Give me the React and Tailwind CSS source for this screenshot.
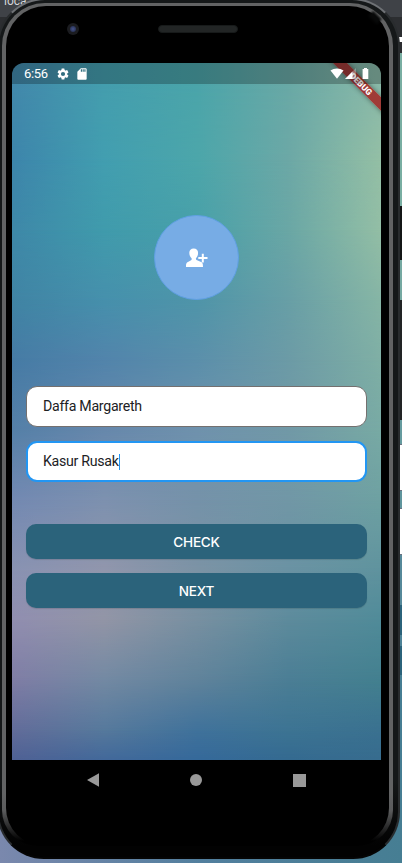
import React from "react";

/* Wallpaper: horizontal colour bands, each one fading in over the band above it. */
function Wallpaper() {
  return (
    <div className="absolute inset-0 bg-[linear-gradient(90deg,#4288ab,#449eae_25%,#4ba5aa_50%,#69a9a6_75%,#8ab9a8)]">
      <div className="absolute inset-0 bg-[linear-gradient(90deg,#3d85ab,#429eb0_25%,#4ca6aa_50%,#6ca8a6_75%,#94bfa5)] [mask-image:linear-gradient(transparent_20px,black_97px)]" />
      <div className="absolute inset-0 bg-[linear-gradient(90deg,#3e88a8,#409bac_25%,#48a0a9_50%,#6aa7a5_75%,#93bea5)] [mask-image:linear-gradient(transparent_97px,black_167px)]" />
      <div className="absolute inset-0 bg-[linear-gradient(90deg,#4084a4,#4690ac_25%,#4f95a9_50%,#689fa6_75%,#86b5a5)] [mask-image:linear-gradient(transparent_167px,black_237px)]" />
      <div className="absolute inset-0 bg-[linear-gradient(90deg,#467ba5,#5284ab_25%,#5b8fab_50%,#6c9ba6_75%,#7fafa5)] [mask-image:linear-gradient(transparent_237px,black_297px)]" />
      <div className="absolute inset-0 bg-[linear-gradient(90deg,#5580a8,#6788ac_25%,#6f92ad_50%,#7199a7_75%,#78aaa4)] [mask-image:linear-gradient(transparent_297px,black_367px)]" />
      <div className="absolute inset-0 bg-[linear-gradient(90deg,#7389b2,#7d91af_25%,#7592a9_50%,#7197a6_75%,#6ea1a2)] [mask-image:linear-gradient(transparent_367px,black_437px)]" />
      <div className="absolute inset-0 bg-[linear-gradient(90deg,#8992b2,#9196ac_25%,#7c93a5_50%,#6a92a3_75%,#5f939e)] [mask-image:linear-gradient(transparent_437px,black_507px)]" />
      <div className="absolute inset-0 bg-[linear-gradient(90deg,#918eb0,#9295a6_25%,#7890a1_50%,#5d8b9c_75%,#508b99)] [mask-image:linear-gradient(transparent_507px,black_557px)]" />
      <div className="absolute inset-0 bg-[linear-gradient(90deg,#7f7da5,#7389a3_25%,#60839b_50%,#4b7e95_75%,#43808f)] [mask-image:linear-gradient(transparent_557px,black_617px)]" />
      <div className="absolute inset-0 bg-[linear-gradient(90deg,#626c9a,#56799c_25%,#40729b_50%,#3d7493_75%,#3a7190)] [mask-image:linear-gradient(transparent_617px,black_667px)]" />
      <div className="absolute inset-0 bg-[linear-gradient(90deg,#4f6194,#42689a_25%,#35699a_50%,#346a90_75%,#376c8e)] [mask-image:linear-gradient(transparent_667px,black_697px)]" />
    </div>
  );
}

function StatusBar() {
  return (
    <div className="relative flex h-[21px] items-center bg-black/25 pl-3 pr-3 text-white">
      <span className="w-[24px] text-[13px] font-normal leading-5 tracking-[-0.3px]">6:56</span>
      <svg className="ml-[8px] size-[14px]" viewBox="0 0 24 24" fill="currentColor">
        <path d="M19.14 12.94c.04-.3.06-.61.06-.94s-.02-.64-.07-.94l2.03-1.58a.49.49 0 0 0 .12-.61l-1.92-3.32a.49.49 0 0 0-.59-.22l-2.39.96a7 7 0 0 0-1.62-.94l-.36-2.54a.48.48 0 0 0-.48-.41h-3.84a.47.47 0 0 0-.47.41l-.36 2.54c-.59.24-1.13.57-1.62.94l-2.39-.96a.48.48 0 0 0-.59.22L2.74 8.87a.47.47 0 0 0 .12.61l2.03 1.58a7.2 7.2 0 0 0 0 1.88l-2.03 1.58a.49.49 0 0 0-.12.61l1.92 3.32c.12.22.37.29.59.22l2.39-.96c.5.38 1.03.7 1.62.94l.36 2.54c.05.24.24.41.48.41h3.84c.24 0 .44-.17.47-.41l.36-2.54a7 7 0 0 0 1.62-.94l2.39.96c.22.08.47 0 .59-.22l1.92-3.32a.47.47 0 0 0-.12-.61zM12 15.6a3.6 3.6 0 1 1 0-7.2 3.6 3.6 0 0 1 0 7.2z" />
      </svg>
      <svg className="ml-[5px] size-[14px]" viewBox="0 0 24 24" fill="currentColor">
        <path d="M18 2h-8L4 8v12c0 1.100.9 2 2 2h12c1.100 0 2-.9 2-2V4c0-1.100-.9-2-2-2zm-6 6h-2V4h2zm3 0h-2V4h2zm3 0h-2V4h2z" />
      </svg>
      <div className="ml-auto flex items-center pb-px">
        <svg className="h-[11px] w-[14px]" viewBox="0 0 14 11" fill="currentColor">
          <path d="M.5 2.600C4.200-.3 9.800-.3 13.500 2.600L7 10.700z" />
        </svg>
        <svg className="ml-[1px] h-[11px] w-[11px]" viewBox="0 0 11 11" fill="currentColor">
          <path d="M0 11 11 0v11z" opacity=".3" />
          <path d="M0 11 7.500 3.500V11z" />
        </svg>
        <svg className="ml-[6px] h-[11px] w-[7px]" viewBox="0 0 7 11" fill="currentColor">
          <path d="M2 0h3v1h1.300v10H.6V1H2z" />
        </svg>
      </div>
    </div>
  );
}

function Field({ children, className }) {
  return (
    <div className={"flex items-center rounded-[11px] bg-white text-[14.2px] tracking-[-0.3px] text-[#202124] " + className}>
      {children}
    </div>
  );
}

function ActionButton({ children }) {
  return (
    <button className="block h-[35px] w-full rounded-[10px] bg-[#2b637b] pt-px font-[Inter,'Open_Sans',sans-serif] text-[13.6px] font-medium tracking-[-0.25px] text-white shadow-[0_1px_1px_rgba(0,0,0,0.12)]">
      {children}
    </button>
  );
}

function Avatar() {
  return (
    <div className="mx-auto mt-[131px] flex size-[85px] items-center justify-center rounded-full border border-[#5f9fe3] bg-[#77ace5]">
      <svg className="h-5 w-[22px]" viewBox="0 0 22 20" fill="white">
        <path d="M7.700.4c2.700 0 4.400 1.700 4.400 4.300 0 2.200-.8 4.300-2 5.300-.4.600-.2 1.700.4 2l4.600 1.900c1.400.6 1.900 1.500 1.900 5.100H0c0-3.600.5-4.500 1.900-5.100l3.200-1.600c.7-.4.8-1.700.3-2.300-1.300-1.100-2.100-3.100-2.100-5.300C3.300 2.100 5 .4 7.700.4z" />
        <path d="M15.800 5.800h2v3.300h3.700v1.900h-3.700v3.500h-2V11h-3.500V9.100h3.500z" />
      </svg>
    </div>
  );
}

function Screen() {
  return (
    <div className="relative h-[697px] w-[369px] overflow-hidden rounded-t-[12px]">
      <Wallpaper />
      <div className="absolute -right-[20px] top-[16px] flex h-[10px] w-20 rotate-45 items-center justify-center bg-[#a51c1c]/80 text-[8.500px] font-black leading-none text-white shadow-[0_0_5px_rgba(0,0,0,0.45)]">
        DEBUG
      </div>
      <div className="relative">
        <StatusBar />
        <Avatar />
        <div className="mx-[14px] mt-[86px]">
          <Field className="h-[41px] border border-[#74706f] pl-4">Daffa Margareth</Field>
          <Field className="mt-[14px] h-[41px] border-2 border-[#2296f3] pl-[15px]">
            Kasur Rusak
            <span className="h-4 w-px bg-[#2196f3]" />
          </Field>
          <div className="mt-[42px] flex flex-col gap-[14px]">
            <ActionButton>CHECK</ActionButton>
            <ActionButton>NEXT</ActionButton>
          </div>
        </div>
      </div>
    </div>
  );
}

function NavigationBar() {
  return (
    <div className="flex h-[40px] w-[369px] items-center justify-between pl-[75px] pr-[75px]">
      <svg className="h-[14px] w-3" viewBox="0 0 12 14" fill="#999"><path d="M0 7 12 .3v13.400z" /></svg>
      <div className="size-3 rounded-full bg-[#999]" />
      <div className="size-[13px] bg-[#999]" />
    </div>
  );
}

/* What shows of the desktop along the right edge, behind the phone. */
function Desktop() {
  return (
    <div className="absolute inset-0 flex flex-col bg-[linear-gradient(90deg,#7a88ad,#527f9e_50%,#467e93)]">
      <div className="flex h-[53px] shrink-0 justify-between bg-[linear-gradient(#3f4247_17px,#2c2e31_17px)]">
        <span className="-mt-[7px] ml-1 text-[12px] leading-4 text-[#d5d7da]">loca</span>
        <span className="mt-[37px] h-[5px] w-[3px] bg-white" />
      </div>
      <div className="ml-auto flex w-[5px] flex-col">
        <div className="h-[153px] bg-[#79aea2]" />
        <div className="h-[54px] bg-[#141617]" />
        <div className="h-[40px] bg-[#75a9a2]" />
        <div className="h-[120px] bg-[#222425]" />
        <div className="h-[24px] bg-[#659b9f]" />
        <div className="h-[47px] border-y border-gray-500 bg-white" />
        <div className="h-[17px] bg-[#5f959d]" />
        <div className="h-[47px] border-y border-gray-500 bg-white" />
        <div className="h-[50px] bg-[#56899a]" />
        <div className="h-[30px] bg-[#2b637b]" />
        <div className="h-[11px] bg-[#4d8297]" />
        <div className="h-[29px] bg-[#2b637b]" />
      </div>
    </div>
  );
}

export default function App() {
  return (
    <div className="relative h-[863px] w-[402px] overflow-hidden font-[Roboto,sans-serif]">
      <Desktop />
      <div className="relative -ml-[3px] -mt-[2px] h-[861px] w-[403px] rounded-t-[48px] rounded-b-[47px] border-2 border-[#292c2e] border-t-[#6f7276] border-b-[#050505] bg-[linear-gradient(#151819_780px,#020202_845px)] pr-[5px] pt-[3px]">
        <div className="ml-[3px] h-[843px] rounded-t-[43px] rounded-b-[36px] bg-[linear-gradient(#626364_790px,#5a5b5c_808px,#000_838px)] px-[4px] pt-[3px]">
          <div className="h-[840px] rounded-t-[40px] rounded-b-[38px] bg-black">
            <div className="flex h-[57px] items-start pl-[61px] pt-[17px]">
              <div className="flex size-3 items-center justify-center rounded-full bg-[#1b1c20]">
                <div className="size-[6px] rounded-full bg-[radial-gradient(#47558c,#1d2543)]" />
              </div>
              <div className="ml-[79px] mt-[2px] h-2 w-20 rounded-full border border-[#171a1a] bg-[#222525]" />
            </div>
            <div className="ml-[6px]">
              <Screen />
              <NavigationBar />
            </div>
          </div>
        </div>
        <div className="absolute right-[17px] top-[14px] h-[7px] w-[12px] rotate-45 bg-[#080909] blur-[1px]" />
      </div>
    </div>
  );
}
